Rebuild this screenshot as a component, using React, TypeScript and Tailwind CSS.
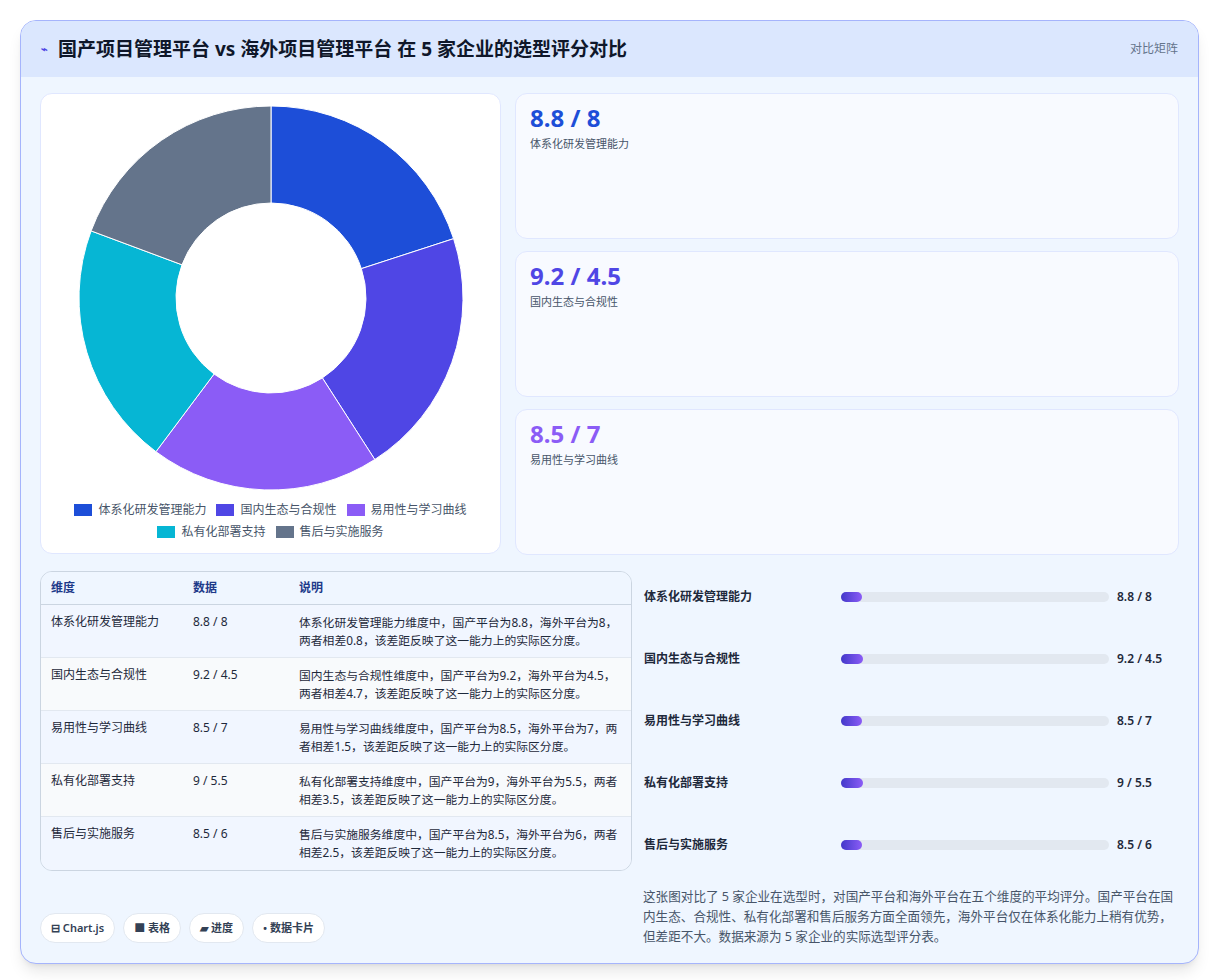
const rows = [
  { name: "体系化研发管理能力", a: 8.8, b: 8, color: "#1d4ed8" },
  { name: "国内生态与合规性", a: 9.2, b: 4.5, color: "#4f46e5" },
  { name: "易用性与学习曲线", a: 8.5, b: 7, color: "#8b5cf6" },
  { name: "私有化部署支持", a: 9, b: 5.5, color: "#06b6d4" },
  { name: "售后与实施服务", a: 8.5, b: 6, color: "#64748b" },
];

const font = { fontFamily: '"Noto Sans", "Noto Sans CJK SC", sans-serif' };

function Donut() {
  const total = rows.reduce((s, r) => s + r.a, 0);
  const cx = 192, cy = 192, R = 192, r = 95;
  let acc = 0;
  const pt = (ang: number, rad: number) => [cx + rad * Math.sin(ang), cy - rad * Math.cos(ang)];
  return (
    <svg width="384" height="384" viewBox="0 0 384 384">
      {rows.map((row) => {
        const a0 = (acc / total) * Math.PI * 2;
        acc += row.a;
        const a1 = (acc / total) * Math.PI * 2;
        const [x0, y0] = pt(a0, R), [x1, y1] = pt(a1, R), [x2, y2] = pt(a1, r), [x3, y3] = pt(a0, r);
        const lg = a1 - a0 > Math.PI ? 1 : 0;
        return (
          <path key={row.name} fill={row.color} stroke="#fff" strokeWidth="1"
            d={`M${x0} ${y0} A${R} ${R} 0 ${lg} 1 ${x1} ${y1} L${x2} ${y2} A${r} ${r} 0 ${lg} 0 ${x3} ${y3} Z`} />
        );
      })}
    </svg>
  );
}

export default function App() {
  return (
    <div className="min-h-screen bg-white p-5" style={font}>
      <div className="overflow-hidden rounded-2xl border border-[#a5b4fc] bg-[#eff6ff] shadow-lg">
        <div className="flex h-14 items-center justify-between bg-[#dbe7fe] px-5">
          <div className="flex items-center gap-2.5 text-[19px] font-bold text-[#0f172a]">
            <span className="text-[11px] text-[#4f46e5]">⌁</span>
            国产项目管理平台 vs 海外项目管理平台 在 5 家企业的选型评分对比
          </div>
          <span className="text-xs text-[#64748b]">对比矩阵</span>
        </div>
        <div className="flex flex-col gap-4 px-[19px] pt-4 pb-4">
          <div className="flex gap-3.5">
            <div className="flex h-[461px] w-[461px] flex-col items-center rounded-xl border border-[#e0e7ff] bg-white pt-3">
              <Donut />
              <div className="mt-3 flex w-[420px] flex-wrap justify-center gap-x-2.5 gap-y-1.5 text-xs text-[#475569]">
                {rows.map((r) => (
                  <span key={r.name} className="flex items-center gap-1.5">
                    <span className="inline-block h-3 w-[18px]" style={{ background: r.color }} />
                    {r.name}
                  </span>
                ))}
              </div>
            </div>
            <div className="flex flex-1 flex-col gap-3">
              {rows.slice(0, 3).map((r) => (
                <div key={r.name} className="h-[146px] rounded-xl border border-[#e0e7ff] bg-[#f8faff] px-3.5 py-2">
                  <div className="text-2xl font-bold" style={{ color: r.color }}>{r.a} / {r.b}</div>
                  <div className="mt-0.5 text-[11px] text-[#475569]">{r.name}</div>
                </div>
              ))}
            </div>
          </div>
          <div className="flex gap-3">
            <div className="w-[592px] overflow-hidden rounded-xl border border-[#cbd5e1] text-xs">
              <div className="grid grid-cols-[142px_106px_1fr] border-b border-[#cbd5e1] bg-[#eff6ff] px-2.5 py-2 font-semibold text-[#1e3a8a]">
                <span>维度</span><span>数据</span><span>说明</span>
              </div>
              {rows.map((r, i) => (
                <div key={r.name} className={`grid h-[53px] grid-cols-[142px_106px_1fr] border-b border-[#e2e8f0] pl-2.5 pr-1.5 pt-2 leading-[18px] text-[#1e293b] last:border-b-0 ${i % 2 ? "bg-[#f8fafc]" : "bg-[#f1f6ff]"}`}>
                  <span>{r.name}</span>
                  <span>{r.a} / {r.b}</span>
                  <span className="text-[11.8px]">{r.name}维度中，国产平台为{r.a}，海外平台为{r.b}，两者相差{Math.round((r.a - r.b) * 10) / 10}，该差距反映了这一能力上的实际区分度。</span>
                </div>
              ))}
            </div>
            <div className="flex flex-1 flex-col justify-between py-1.5">
              {rows.map((r) => (
                <div key={r.name} className="flex h-[40px] items-center text-xs font-semibold text-[#1e293b]">
                  <span className="w-[197px]">{r.name}</span>
                  <div className="h-2.5 w-[268px] rounded-full bg-[#e2e8f0]">
                    <div className="h-full rounded-full bg-gradient-to-r from-[#4338ca] to-[#8b5cf6]" style={{ width: `${r.a * 0.9}%` }} />
                  </div>
                  <span className="ml-2">{r.a} / {r.b}</span>
                </div>
              ))}
            </div>
          </div>
          <div className="flex items-end justify-between">
            <div className="flex gap-2 pb-1 text-[11px] font-semibold text-[#334155]">
              {["⊟ Chart.js", "■ 表格", "▰ 进度", "• 数据卡片"].map((t) => (
                <span key={t} className="rounded-full border border-[#e2e8f0] bg-white px-2.5 py-1.5">{t}</span>
              ))}
            </div>
            <p className="w-[536px] text-[12.6px] leading-[20px] text-[#475569]">
              这张图对比了 5 家企业在选型时，对国产平台和海外平台在五个维度的平均评分。国产平台在国内生态、合规性、私有化部署和售后服务方面全面领先，海外平台仅在体系化能力上稍有优势，但差距不大。数据来源为 5 家企业的实际选型评分表。
            </p>
          </div>
        </div>
      </div>
    </div>
  );
}
